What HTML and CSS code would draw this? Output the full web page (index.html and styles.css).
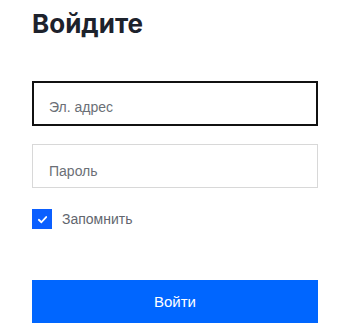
FILE: index.html
```html
<!DOCTYPE html>
<html lang="ru">
<head>
  <meta charset="UTF-8" />
  <meta name="viewport" content="width=device-width, initial-scale=1.0"/>
  <title>Войдите</title>
  <link rel="stylesheet" href="styles.css">
</head>
<body>
  <div class="login">
    <h1 class="title">Войдите</h1>

    <form class="form">
      <input type="email" class="field field-active" placeholder="Эл. адрес" />
      <input type="password" class="field" placeholder="Пароль" />

      <label class="remember">
        <span class="check">
          <svg viewBox="0 0 12 12" width="11" height="11">
            <path d="M2 6.3 L4.8 9 L10 3.3" stroke="#fff" stroke-width="2" fill="none" stroke-linecap="round" stroke-linejoin="round"/>
          </svg>
        </span>
        <span class="remember-text">Запомнить</span>
      </label>

      <button type="button" class="submit">Войти</button>
    </form>
  </div>
</body>
</html>
```

FILE: styles.css
```css
html, body {
  margin: 0;
  padding: 0;
  background: #fff;
  width: 100%;
  height: 100%;
  overflow: hidden;
}

.login {
  padding: 8px 29px 0 32px;
  font-family: 'Liberation Sans', Arial, sans-serif;
}

.title {
  margin: 0;
  font-family: Inter, 'Noto Sans', sans-serif;
  font-size: 26px;
  font-weight: 700;
  line-height: 32px;
  color: #1d222c;
}

.form {
  display: flex;
  flex-direction: column;
  margin-top: 41px;
}

.field {
  box-sizing: border-box;
  height: 44px;
  padding: 9px 16px 0;
  font-family: 'Liberation Sans', Arial, sans-serif;
  font-size: 14px;
  border: 1px solid #d8d8d8;
  border-radius: 0;
  outline: none;
  color: #333;
}

.field::placeholder {
  color: #6b6f76;
}

.field-active {
  height: 45px;
  border: 2px solid #111;
  padding: 7px 15px 0;
  margin-bottom: 18px;
}

.remember {
  display: flex;
  align-items: center;
  gap: 10px;
  margin-top: 21px;
}

.check {
  display: flex;
  align-items: center;
  justify-content: center;
  width: 20px;
  height: 20px;
  background: #0b5fff;
}

.remember-text {
  font-size: 14px;
  color: #62666e;
}

.submit {
  margin-top: 51px;
  height: 43px;
  border: none;
  border-radius: 0;
  background: #0066ff;
  color: #fff;
  font-family: 'Liberation Sans', Arial, sans-serif;
  font-size: 15px;
  cursor: pointer;
}
```
